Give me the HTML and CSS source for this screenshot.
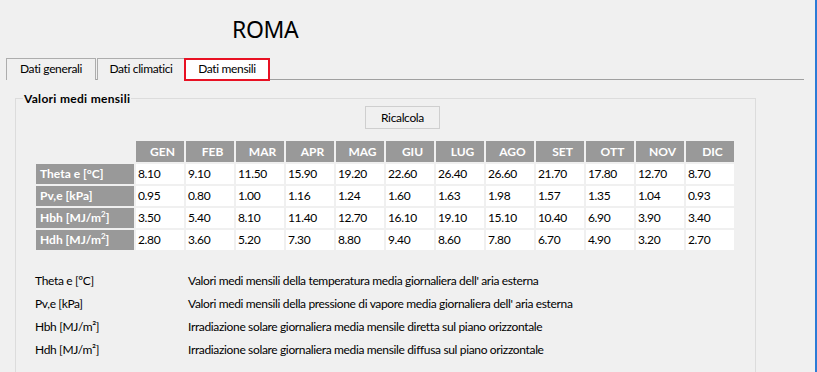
FILE: index.html
```html
<!DOCTYPE html>
<html>
<head>
<meta charset="utf-8">
<link rel="stylesheet" href="styles.css">
</head>
<body>
<div class="window">
  <h1 class="title">ROMA</h1>
  <div class="tabs">
    <div class="tab t1">Dati generali</div>
    <div class="tab t2">Dati climatici</div>
    <div class="tab active">Dati mensili</div>
  </div>
  <fieldset class="group">
    <legend>Valori medi mensili</legend>
    <div class="btnrow"><button class="btn">Ricalcola</button></div>
    <div class="grid">
      <div class="blank"></div>
      <div class="hd">GEN</div><div class="hd">FEB</div><div class="hd">MAR</div><div class="hd">APR</div><div class="hd">MAG</div><div class="hd">GIU</div><div class="hd">LUG</div><div class="hd">AGO</div><div class="hd">SET</div><div class="hd">OTT</div><div class="hd">NOV</div><div class="hd">DIC</div>

      <div class="rh">Theta e [°C]</div>
      <div class="c">8.10</div><div class="c">9.10</div><div class="c">11.50</div><div class="c">15.90</div><div class="c">19.20</div><div class="c">22.60</div><div class="c">26.40</div><div class="c">26.60</div><div class="c">21.70</div><div class="c">17.80</div><div class="c">12.70</div><div class="c">8.70</div>

      <div class="rh">Pv,e [kPa]</div>
      <div class="c">0.95</div><div class="c">0.80</div><div class="c">1.00</div><div class="c">1.16</div><div class="c">1.24</div><div class="c">1.60</div><div class="c">1.63</div><div class="c">1.98</div><div class="c">1.57</div><div class="c">1.35</div><div class="c">1.04</div><div class="c">0.93</div>

      <div class="rh">Hbh [MJ/m<sup>2</sup>]</div>
      <div class="c">3.50</div><div class="c">5.40</div><div class="c">8.10</div><div class="c">11.40</div><div class="c">12.70</div><div class="c">16.10</div><div class="c">19.10</div><div class="c">15.10</div><div class="c">10.40</div><div class="c">6.90</div><div class="c">3.90</div><div class="c">3.40</div>

      <div class="rh">Hdh [MJ/m<sup>2</sup>]</div>
      <div class="c">2.80</div><div class="c">3.60</div><div class="c">5.20</div><div class="c">7.30</div><div class="c">8.80</div><div class="c">9.40</div><div class="c">8.60</div><div class="c">7.80</div><div class="c">6.70</div><div class="c">4.90</div><div class="c">3.20</div><div class="c">2.70</div>
    </div>
    <div class="legend-list">
      <div class="lrow"><span class="lk">Theta e [ºC]</span><span class="lv">Valori medi mensili della temperatura media giornaliera dell' aria esterna</span></div>
      <div class="lrow"><span class="lk">Pv,e [kPa]</span><span class="lv">Valori medi mensili della pressione di vapore media giornaliera dell' aria esterna</span></div>
      <div class="lrow"><span class="lk">Hbh [MJ/m²]</span><span class="lv">Irradiazione solare giornaliera media mensile diretta sul piano orizzontale</span></div>
      <div class="lrow"><span class="lk">Hdh [MJ/m²]</span><span class="lv">Irradiazione solare giornaliera media mensile diffusa sul piano orizzontale</span></div>
    </div>
  </fieldset>
</div>
</body>
</html>
```

FILE: styles.css
```css
* { box-sizing: border-box; }
html, body { margin: 0; padding: 0; }
body {
  background: #f0f0f0;
  font-family: Lato, "Noto Sans", sans-serif;
  font-size: 12px;
  letter-spacing: -0.35px;
  color: #000;
}
.window {
  width: 817px;
  height: 372px;
  overflow: hidden;
  border-right: 2px solid #2b7bd6;
  padding-top: 12px;
}
.title {
  margin: 0 0 0 232px;
  font-family: "Noto Sans", sans-serif;
  font-weight: normal;
  font-size: 23px;
  line-height: 34px;
  height: 34px;
  letter-spacing: -0.4px;
}
.tabs {
  display: flex;
  margin: 12px 0 0 6px;
  width: 798px;
  height: 22px;
  border-bottom: 1px solid #a0a0a0;
  align-items: flex-start;
}
.tab {
  height: 22px;
  border: 1px solid #adadad;
  border-bottom: none;
  background: #f0f0f0;
  line-height: 20px;
  text-align: center;
  color: #000;
}
.t1 { width: 90px; }
.t2 { width: 87px; margin-left: 1px; border-right: none; }
.tab.active {
  width: 86px;
  height: 23px;
  background: #fff;
  border: 2px solid #e81123;
  line-height: 18px;
}
.group {
  margin: 12px 0 0 15px;
  width: 741px;
  height: 300px;
  border: 1px solid #dcdcdc;
  padding: 0;
}
.group legend {
  font-weight: bold;
  font-size: 12px;
  letter-spacing: 0.3px;
  padding: 0 1px;
  margin-left: 7px;
  line-height: 13px;
}
.btnrow { padding: 1px 0 0 349px; }
.btn {
  width: 75px;
  height: 23px;
  background: #f0f0f0;
  border: 1px solid #cfcfcf;
  font-family: inherit;
  font-size: 12px;
  letter-spacing: -0.35px;
  color: #000;
  padding: 0;
}
.grid {
  display: grid;
  grid-template-columns: 98px repeat(12, 48px);
  grid-template-rows: 21px repeat(4, 20px);
  gap: 2px;
  margin: 12px 0 0 20px;
}
.hd {
  background: #999;
  color: #fff;
  font-weight: bold;
  letter-spacing: 0;
  text-align: center;
  line-height: 21px;
  padding-left: 5px;
}
.rh {
  background: #999;
  color: #fff;
  font-weight: bold;
  letter-spacing: 0;
  line-height: 20px;
  padding-left: 4px;
  white-space: nowrap;
}
.rh sup { font-size: 8px; vertical-align: 5px; line-height: 0; }
.c {
  background: #fff;
  line-height: 20px;
  padding-left: 2px;
}
.legend-list {
  margin: 19px 0 0 19px;
  display: flex;
  flex-direction: column;
}
.lrow {
  display: flex;
  height: 23px;
  line-height: 23px;
}
.lk { width: 153px; }
.lv { white-space: nowrap; }
```
